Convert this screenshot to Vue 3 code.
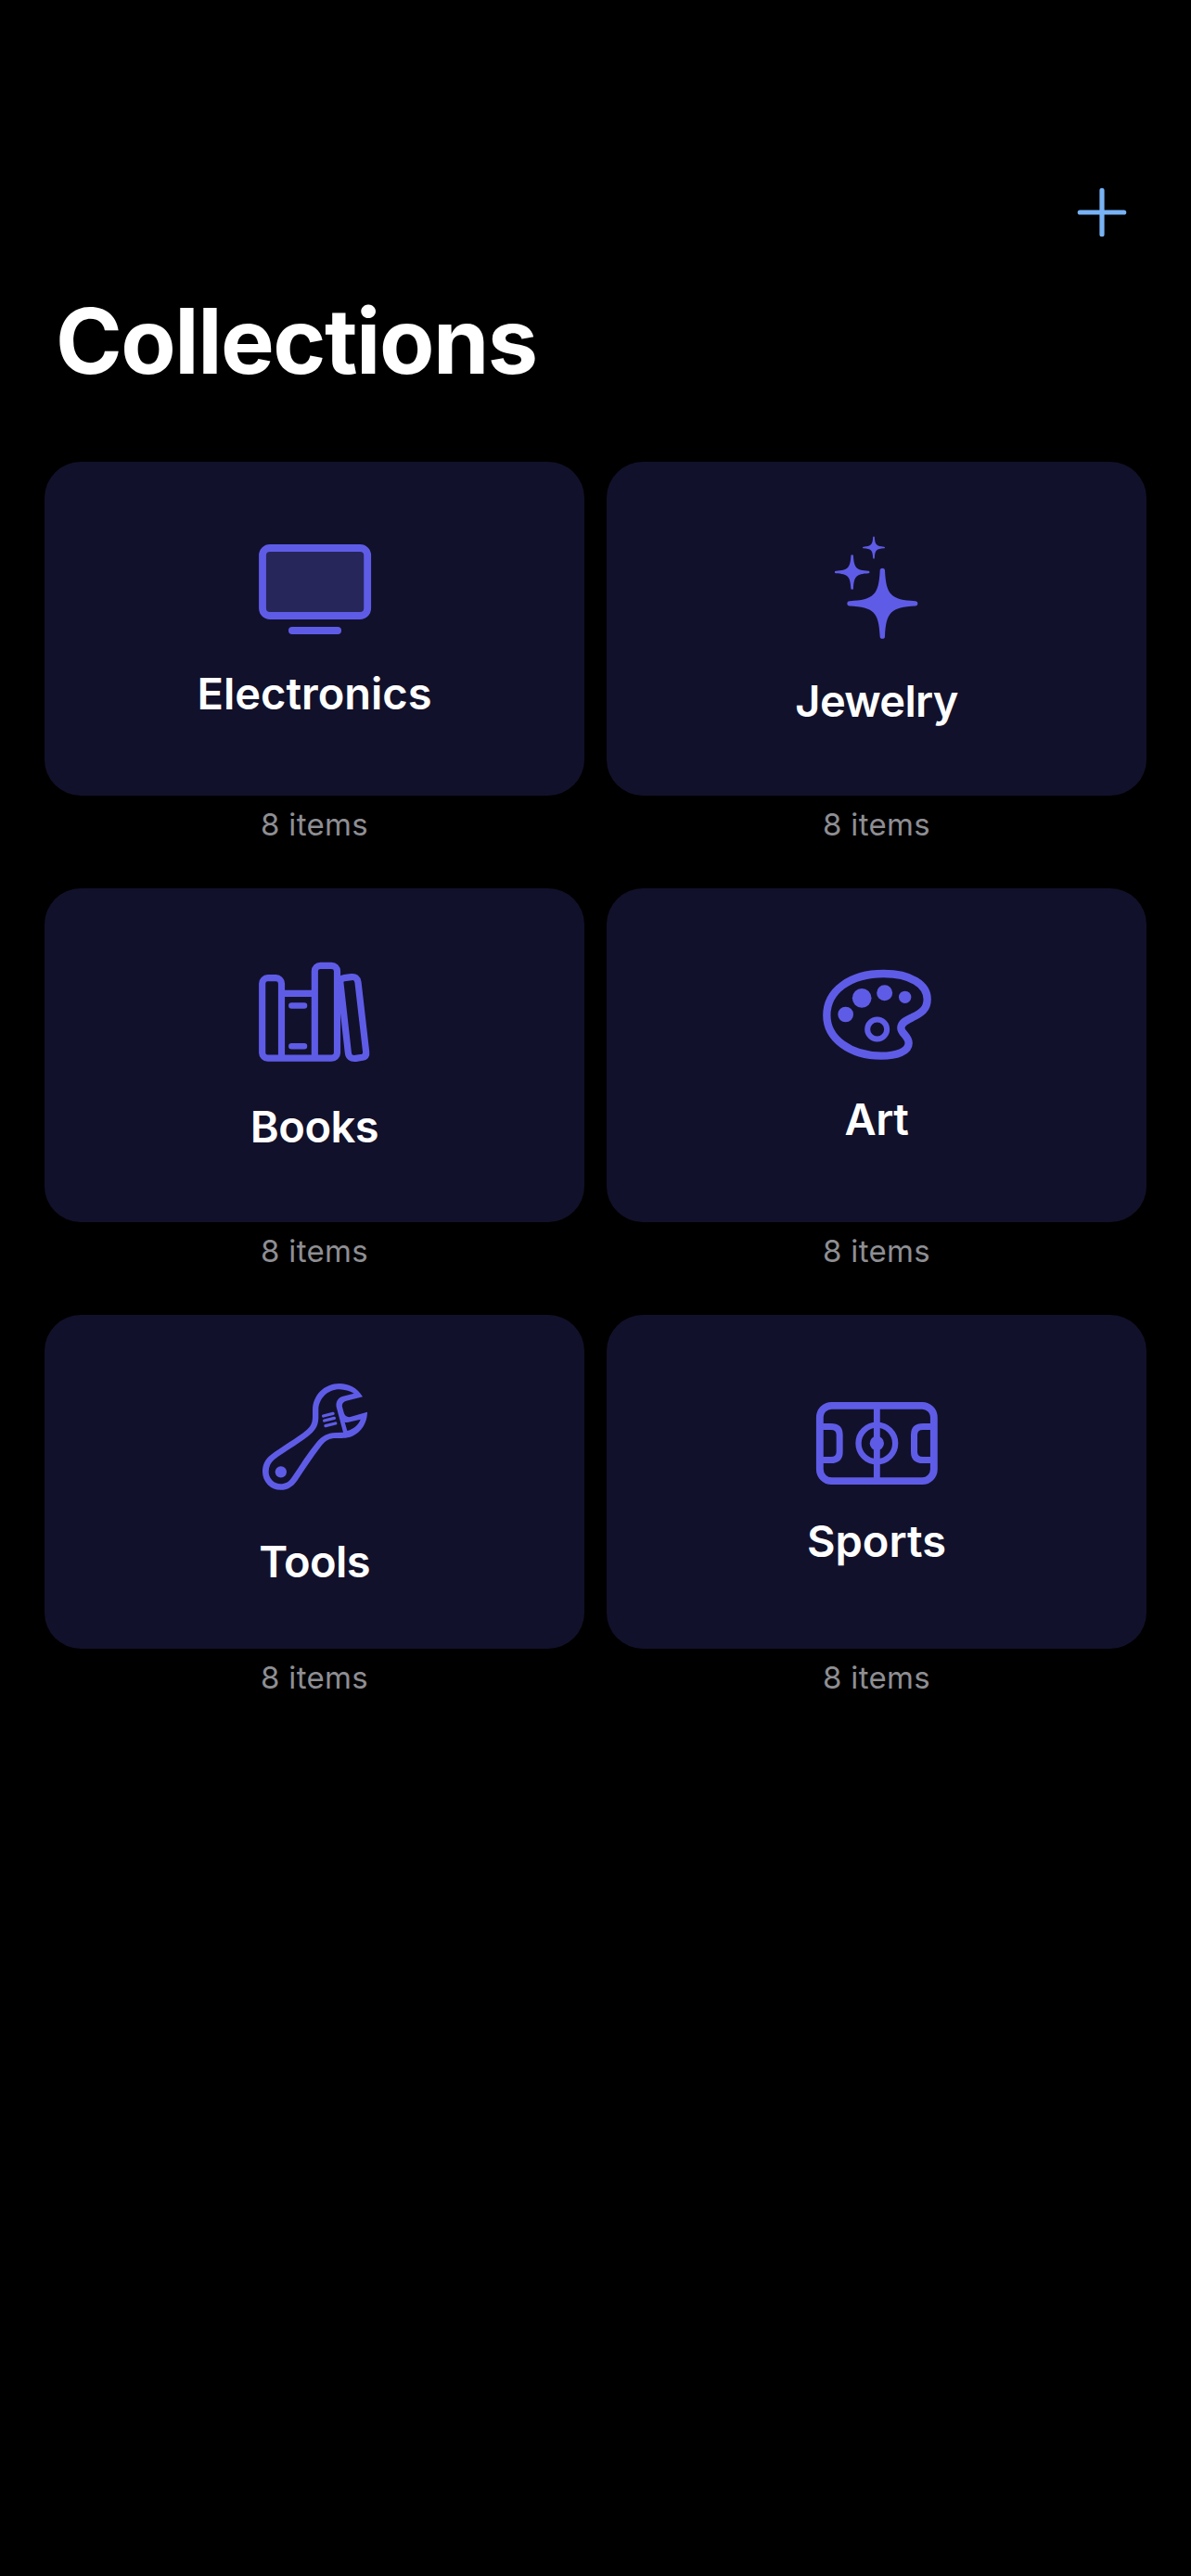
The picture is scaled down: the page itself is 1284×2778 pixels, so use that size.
<script setup>
const collections = [
  { id: 'electronics', name: 'Electronics', count: 8, x: -3, y: 15, h: 124, spacing: '0px' },
  { id: 'jewelry', name: 'Jewelry', count: 8, x: -45, y: 21, h: 140, spacing: '-0.7px' },
  { id: 'books', name: 'Books', count: 8, x: -3, y: 24, h: 138, spacing: '-0.5px' },
  { id: 'art', name: 'Art', count: 8, x: -15, y: 18, h: 122, spacing: '-0.4px' },
  { id: 'tools', name: 'Tools', count: 8, x: -18, y: 27, h: 156, spacing: '-0.6px' },
  { id: 'sports', name: 'Sports', count: 8, x: 0, y: 33, h: 112, spacing: '0px' },
]
const star =
  'M-8 -106A8 8 0 0 1 8 -106C12 -28 28 -12 106 -8A8 8 0 0 1 106 8C28 12 12 28 8 106A8 8 0 0 1 -8 106C-12 28 -28 12 -106 8A8 8 0 0 1 -106 -8C-28 -12 -12 -28 -8 -106Z'
</script>

<template>
  <main class="screen">
    <header class="toolbar">
      <button class="add" aria-label="Add collection">
        <svg width="54" height="54" viewBox="0 0 54 54">
          <path d="M27 3.3V50.7M3.3 27H50.7" stroke="#78b2f4" stroke-width="5.2" stroke-linecap="round" />
        </svg>
      </button>
    </header>
    <h1 class="title">Collections</h1>
    <section class="grid">
      <article v-for="c in collections" :key="c.id" class="item">
        <div class="card">
          <svg class="icon" width="160" :height="c.h" :viewBox="`${c.x} ${c.y} 480 ${c.h * 3}`">
            <g v-if="c.id === 'electronics'">
              <rect x="69" y="63" width="339.5" height="219" rx="24" fill="#26265b" stroke-width="23.5" />
              <path d="M165 330H312" stroke-width="24" stroke-linecap="round" />
            </g>
            <g v-else-if="c.id === 'jewelry'" class="solid">
              <path :d="star" transform="translate(214 272.5)" />
              <path :d="star" transform="translate(116 171) scale(.495)" />
              <path :d="star" transform="translate(186 91.5) scale(.315)" />
            </g>
            <g v-else-if="c.id === 'books'" stroke-width="21.5">
              <path d="M130.5 363.5V122a18 18 0 0 0 -18 -18H86a18 18 0 0 0 -18 18V345.500a18 18 0 0 0 18 18H292.500a18 18 0 0 0 18 -18V82a18 18 0 0 0 -18 -18H256a18 18 0 0 0 -18 18V363.500M130.500 154H238" />
              <path d="M320.500 118Q320 106 334 104L356 101Q375 98 378 118L404 343Q406 358 392 361L371 364Q348 367 346 345Z" />
              <path d="M163 193.500H204M163 325H204" stroke-width="19.500" stroke-linecap="round" />
            </g>
            <g v-else-if="c.id === 'art'">
              <path d="M248 60C335 60 389 95 389 143C389 175 370 187 340 202C318 212 304 220 304 236C304 253 329 262 329 285C329 312 290 326 240 326C140 326 64 270 64 195C64 115 140 60 248 60Z" stroke-width="25" />
              <circle cx="227" cy="240" r="31.500" stroke-width="18" />
              <g class="solid">
                <circle cx="125" cy="192" r="25" />
                <circle cx="177.500" cy="139" r="31" />
                <circle cx="251" cy="122" r="25.500" />
                <circle cx="317" cy="136" r="20" />
              </g>
            </g>
            <g v-else-if="c.id === 'tools'">
              <path
                class="solid"
                fill-rule="evenodd"
                d="M378 109C361 80 333 66 303 66C254 66 216 104 216 152L216 172C216 194 211 204 197 216C165 243 115 270 80 298C62 312 54 330 54 352A58.500 58.500 0 0 0 113 410.500C135 410 152 400 166 380C190 345 215 305 244 268C258 250 270 243 292 243C320 243 330 242 345 236C375 222 393 192 393 158L338 174C327 176 320 170 317 160L312 142C310 131 315 125 325 122ZM350 98C335 90 320 86 303 85C265 85 235 115 235 152L235 178C234 200 228 212 214 226C185 254 130 283 92 312C80 322 74 335 74 352A39 39 0 0 0 113 391C128 391 139 385 149 370C175 332 200 290 230 255C247 236 262 226 292 225L315 224L293 142C290 125 298 111 315 107ZM320 191Q328 193 338 190L371 182C365 198 350 213 328 219Z"
              />
              <circle class="solid" cx="113.500" cy="352" r="18.500" />
              <path d="M251 171L282 163M254 186L286 178M258 203L290 195" stroke-width="10" stroke-linecap="round" />
            </g>
            <g v-else>
              <rect x="56.500" y="77.500" width="369" height="244" rx="38" stroke-width="23.500" />
              <path d="M241 78V321" stroke-width="20.500" />
              <circle cx="241" cy="199.500" r="59.500" stroke-width="19" />
              <circle class="solid" cx="241" cy="199.500" r="23" />
              <path d="M57 145.500H92Q120.500 145.500 120.500 172V227Q120.500 253.500 92 253.500H57M425 145.500H390Q361.500 145.500 361.500 172V227Q361.500 253.500 390 253.500H425" stroke-width="21" />
            </g>
          </svg>
          <h2 class="label" :style="{ letterSpacing: c.spacing }">{{ c.name }}</h2>
        </div>
        <p class="count">{{ c.count }} items</p>
      </article>
    </section>
  </main>
</template>

<style>
body {
  background: #000;
}
</style>

<style scoped>
.screen {
  box-sizing: border-box;
  width: 1284px;
  height: 2778px;
  padding: 202px 48px 0;
  background: #000;
  color: #fff;
  font-family: Inter, 'Liberation Sans', sans-serif;
  overflow: hidden;
}
.toolbar {
  display: flex;
  justify-content: flex-end;
  height: 54px;
  padding-right: 21px;
}
.add {
  display: flex;
  padding: 0;
  border: 0;
  background: none;
}
.title {
  height: 120px;
  margin: 52px 0 70px;
  padding-left: 12px;
  font-size: 97px;
  line-height: 120px;
  font-weight: 700;
  letter-spacing: -1.45px;
}
.grid {
  display: grid;
  grid-template-columns: 582px 582px;
  gap: 36px 24px;
}
.item {
  display: flex;
  flex-direction: column;
  height: 424px;
}
.card {
  display: flex;
  flex-direction: column;
  align-items: center;
  justify-content: center;
  gap: 24px;
  height: 360px;
  border-radius: 39px;
  background: #12112b;
}
.icon {
  display: block;
  fill: none;
  stroke: #5e5ce6;
}
.solid {
  fill: #5e5ce6;
  stroke: none;
}
.label {
  height: 58px;
  margin: 0;
  font-size: 47px;
  line-height: 50px;
  font-weight: 600;
}
.count {
  margin: 10px 0 0;
  color: #8e8e93;
  font-size: 33px;
  line-height: 42px;
  letter-spacing: 0.35px;
  text-align: center;
}
</style>
